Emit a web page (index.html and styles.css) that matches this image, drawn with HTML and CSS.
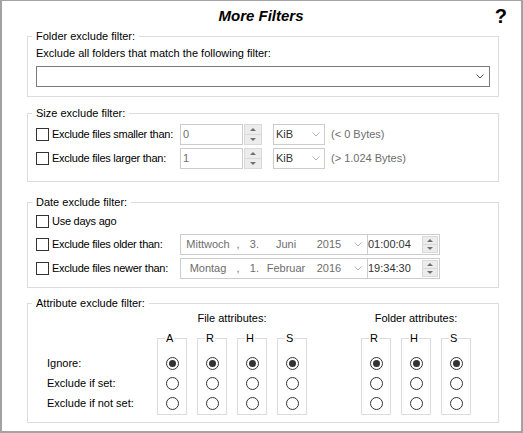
FILE: index.html
```html
<!DOCTYPE html>
<html>
<head>
	<meta charset="utf-8">
	<title>More Filters</title>
	<link rel="stylesheet" href="styles.css">
</head>
<body>
	<div class="window">
		<header class="title-bar">
			<span></span>
			<h1 class="title">More Filters</h1>
			<span class="help">?</span>
		</header>

		<fieldset class="group group-folder">
			<legend>Folder exclude filter:</legend>
			<div class="group-body">
				<div>Exclude all folders that match the following filter:</div>
				<div class="combo combo-wide">
					<svg class="chevron" width="8" height="5" viewBox="0 0 8 5"><polyline points="0.5,0.5 4,4 7.5,0.5" fill="none" stroke="#555" stroke-width="1"/></svg>
				</div>
			</div>
		</fieldset>

		<fieldset class="group group-size">
			<legend>Size exclude filter:</legend>
			<div class="group-body">
				<div class="row">
					<label class="check-label"><span class="check"></span><span class="check-text">Exclude files smaller than:</span></label>
					<div class="field">0</div>
					<div class="spin"><span class="up"></span><span class="down"></span></div>
					<div class="combo combo-unit">
						<span>KiB</span>
						<svg class="chevron" width="8" height="5" viewBox="0 0 8 5"><polyline points="0.5,0.5 4,4 7.5,0.5" fill="none" stroke="#b4b4b4" stroke-width="1"/></svg>
					</div>
					<span class="bytes">(&lt; 0 Bytes)</span>
				</div>
				<div class="row">
					<label class="check-label"><span class="check"></span><span class="check-text">Exclude files larger than:</span></label>
					<div class="field">1</div>
					<div class="spin"><span class="up"></span><span class="down"></span></div>
					<div class="combo combo-unit">
						<span>KiB</span>
						<svg class="chevron" width="8" height="5" viewBox="0 0 8 5"><polyline points="0.5,0.5 4,4 7.5,0.5" fill="none" stroke="#b4b4b4" stroke-width="1"/></svg>
					</div>
					<span class="bytes">(&gt; 1.024 Bytes)</span>
				</div>
			</div>
		</fieldset>

		<fieldset class="group group-date">
			<legend>Date exclude filter:</legend>
			<div class="group-body">
				<div class="row row-short">
					<label class="check-label"><span class="check"></span><span class="check-text">Use days ago</span></label>
				</div>
				<div class="row row-older">
					<label class="check-label"><span class="check"></span><span class="check-text">Exclude files older than:</span></label>
					<div class="datetime">
						<div class="date-part">
							<span class="wd">Mittwoch</span><span class="sep">,</span><span class="day">3.</span><span class="month">Juni</span><span class="year">2015</span>
							<svg class="chevron" width="8" height="5" viewBox="0 0 8 5"><polyline points="0.5,0.5 4,4 7.5,0.5" fill="none" stroke="#b4b4b4" stroke-width="1"/></svg>
						</div>
						<div class="time-part">
							<span>01:00:04</span>
							<div class="spin spin-small"><span class="up"></span><span class="down"></span></div>
						</div>
					</div>
				</div>
				<div class="row">
					<label class="check-label"><span class="check"></span><span class="check-text">Exclude files newer than:</span></label>
					<div class="datetime">
						<div class="date-part">
							<span class="wd">Montag</span><span class="sep">,</span><span class="day">1.</span><span class="month">Februar</span><span class="year">2016</span>
							<svg class="chevron" width="8" height="5" viewBox="0 0 8 5"><polyline points="0.5,0.5 4,4 7.5,0.5" fill="none" stroke="#b4b4b4" stroke-width="1"/></svg>
						</div>
						<div class="time-part">
							<span>19:34:30</span>
							<div class="spin spin-small"><span class="up"></span><span class="down"></span></div>
						</div>
					</div>
				</div>
			</div>
		</fieldset>

		<fieldset class="group group-attr">
			<legend>Attribute exclude filter:</legend>
			<div class="attr-body">
				<div class="attr-labels">
					<div>Ignore:</div>
					<div>Exclude if set:</div>
					<div>Exclude if not set:</div>
				</div>
				<div class="attr-set">
					<h2>File attributes:</h2>
					<div class="attr-cols">
						<fieldset class="attr-col"><legend>A</legend><div class="cell"><span class="radio on"></span></div><div class="cell"><span class="radio"></span></div><div class="cell"><span class="radio"></span></div></fieldset>
						<fieldset class="attr-col"><legend>R</legend><div class="cell"><span class="radio on"></span></div><div class="cell"><span class="radio"></span></div><div class="cell"><span class="radio"></span></div></fieldset>
						<fieldset class="attr-col"><legend>H</legend><div class="cell"><span class="radio on"></span></div><div class="cell"><span class="radio"></span></div><div class="cell"><span class="radio"></span></div></fieldset>
						<fieldset class="attr-col"><legend>S</legend><div class="cell"><span class="radio on"></span></div><div class="cell"><span class="radio"></span></div><div class="cell"><span class="radio"></span></div></fieldset>
					</div>
				</div>
				<div class="attr-set attr-folder">
					<h2>Folder attributes:</h2>
					<div class="attr-cols">
						<fieldset class="attr-col"><legend>R</legend><div class="cell"><span class="radio on"></span></div><div class="cell"><span class="radio"></span></div><div class="cell"><span class="radio"></span></div></fieldset>
						<fieldset class="attr-col"><legend>H</legend><div class="cell"><span class="radio on"></span></div><div class="cell"><span class="radio"></span></div><div class="cell"><span class="radio"></span></div></fieldset>
						<fieldset class="attr-col"><legend>S</legend><div class="cell"><span class="radio on"></span></div><div class="cell"><span class="radio"></span></div><div class="cell"><span class="radio"></span></div></fieldset>
					</div>
				</div>
			</div>
		</fieldset>
	</div>
</body>
</html>
```

FILE: styles.css
```css
* {
	margin: 0;
	padding: 0;
	box-sizing: border-box;
}

body {
	font-family: "Liberation Sans", Arial, sans-serif;
	font-size: 11px;
	line-height: 13px;
	color: #000;
	background: #fff;
}

.window {
	width: 523px;
	height: 433px;
	border: 2px solid #a3a3a3;
	border-top-width: 1px;
	background: #fff;
	overflow: hidden;
}

.title-bar {
	display: grid;
	grid-template-columns: 1fr auto 1fr;
	align-items: start;
	height: 29px;
	padding: 6px 14px 0 13px;
}

.title {
	font-size: 15px;
	line-height: 18px;
	font-weight: bold;
	font-style: italic;
}

.help {
	justify-self: end;
	font-size: 20px;
	line-height: 18px;
	font-weight: bold;
}

/* group boxes */
.group {
	width: 472px;
	min-width: 0;
	margin-left: 25px;
	border: 1px solid #dcdcdc;
}

.group > legend {
	margin-left: 4px;
	padding: 0 4px;
	line-height: 13px;
}

.group-size { margin-top: 10px; }
.group-date { margin-top: 14px; }
.group-attr { margin-top: 9px; }

.group-folder .group-body { padding: 4px 7px 9px 8px; }
.group-size .group-body { padding: 4px 8px 12px; }
.group-date .group-body { padding: 4px 8px 8px; }

/* rows */
.row {
	display: flex;
	align-items: center;
	height: 21px;
}

.row + .row { margin-top: 3px; }
.row-short { height: 17px; }
.row + .row-older { margin-top: 4px; }

.check-label {
	display: flex;
	align-items: center;
	width: 144px;
	flex: none;
}

.check-text {
	letter-spacing: -0.25px;
}

.check {
	width: 13px;
	height: 13px;
	border: 1px solid #333;
	background: #fff;
	flex: none;
	margin-right: 3px;
}

/* inputs */
.combo {
	display: flex;
	align-items: center;
	height: 21px;
	background: #fff;
}

.combo-wide {
	width: 454px;
	margin-top: 6px;
	border: 1px solid #7a7a7a;
	justify-content: flex-end;
	padding-right: 5px;
}

.combo-unit {
	width: 52px;
	margin-left: 11px;
	border: 1px solid #cccccc;
	justify-content: space-between;
	padding: 0 4px 0 2px;
	color: #333;
}

.field {
	display: flex;
	align-items: center;
	width: 63px;
	height: 21px;
	border: 1px solid #cccccc;
	padding-left: 2px;
	color: #6d6d6d;
}

.spin {
	display: flex;
	flex-direction: column;
	width: 18px;
	height: 21px;
	margin-left: 1px;
	border: 1px solid #d9d9d9;
	background: #ececec;
}

.spin span {
	flex: 1;
	display: flex;
	align-items: center;
	justify-content: center;
}

.spin .up { border-bottom: 1px solid #d9d9d9; }

.spin .up::before {
	content: "";
	border-left: 3px solid transparent;
	border-right: 3px solid transparent;
	border-bottom: 3px solid #707070;
}

.spin .down::before {
	content: "";
	border-left: 3px solid transparent;
	border-right: 3px solid transparent;
	border-top: 3px solid #707070;
}

.bytes {
	margin-left: 6px;
	color: #6d6d6d;
}

/* date and time */
.datetime {
	display: flex;
	width: 260px;
	height: 21px;
	border: 1px solid #cccccc;
}

.date-part {
	display: flex;
	align-items: center;
	width: 187px;
	border-right: 1px solid #cccccc;
	color: #6d6d6d;
}

.wd { width: 54px; text-align: center; }
.sep { width: 6px; text-align: center; }
.day { width: 18px; text-align: right; }
.month { width: 40px; margin-left: 7px; text-align: center; }
.year { width: 34px; margin-left: 6px; text-align: center; }

.date-part .chevron {
	margin-left: auto;
	margin-right: 5px;
}

.time-part {
	flex: 1;
	display: flex;
	align-items: center;
	color: #333;
}

.spin-small {
	width: 16px;
	height: 17px;
	margin-left: auto;
	margin-right: 1px;
}

/* attributes */
.attr-body {
	display: flex;
	align-items: flex-start;
	padding: 2px 0 7px 8px;
}

.attr-labels {
	width: 121px;
	padding: 41px 0 0 11px;
	flex: none;
}

.attr-labels div {
	height: 20px;
	line-height: 20px;
}

.attr-set {
	display: flex;
	flex-direction: column;
	align-items: center;
}

.attr-folder { margin-left: 54px; }

.attr-set h2 {
	font-size: 11px;
	font-weight: normal;
	line-height: 13px;
}

.attr-cols {
	display: flex;
	gap: 10px;
	margin-top: 7px;
}

.attr-col {
	width: 30px;
	min-width: 0;
	border: 1px solid #dcdcdc;
	padding: 8px 0 1px;
}

.attr-col legend {
	margin-left: 7px;
	padding: 0 1px;
	line-height: 13px;
}

.cell {
	display: flex;
	align-items: center;
	justify-content: center;
	height: 20px;
}

.radio {
	display: flex;
	align-items: center;
	justify-content: center;
	width: 13px;
	height: 13px;
	border: 1px solid #333;
	border-radius: 50%;
	background: #fff;
}

.radio.on::after {
	content: "";
	width: 7px;
	height: 7px;
	border-radius: 50%;
	background: #333;
}
```
